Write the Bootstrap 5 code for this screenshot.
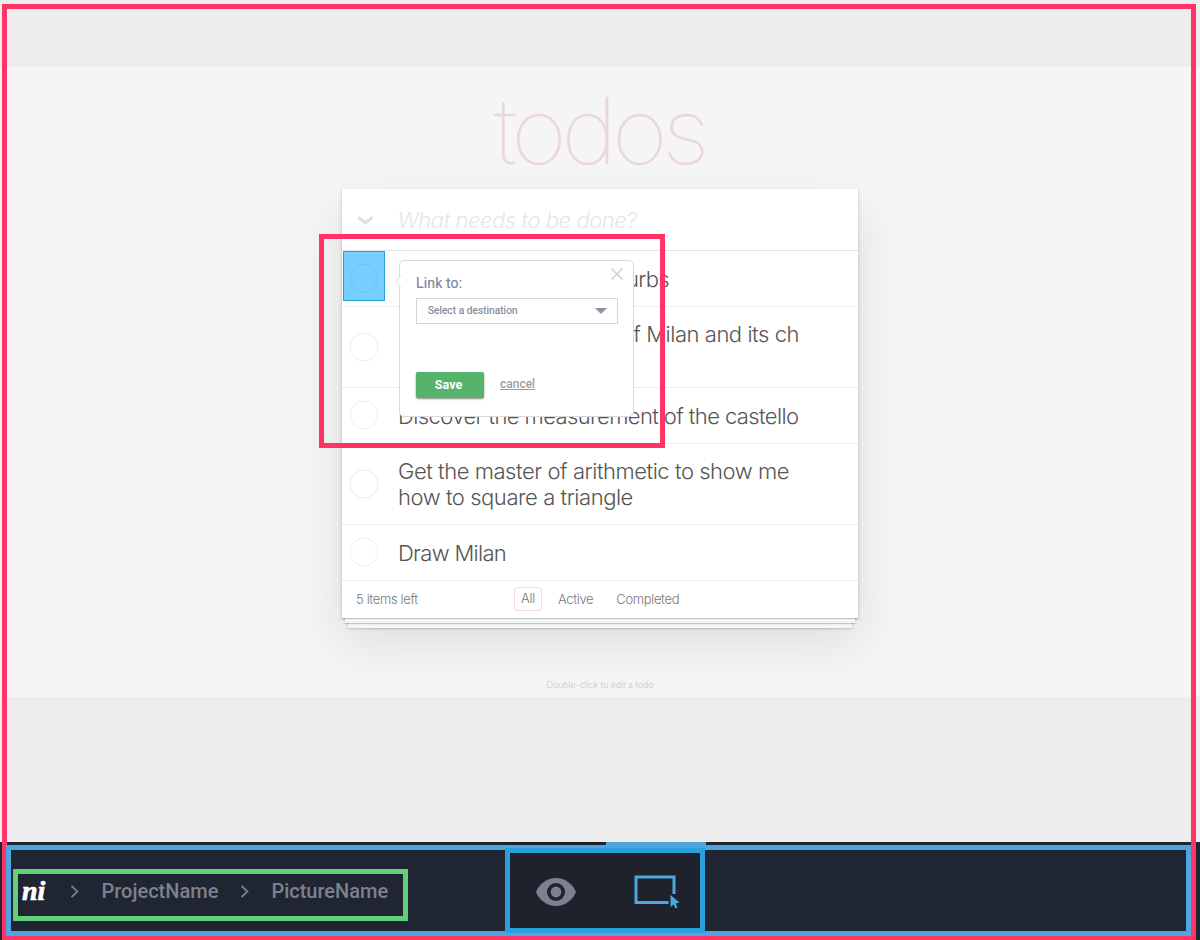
<!DOCTYPE html>
<html lang="en">
<head>
<meta charset="utf-8">
<meta name="viewport" content="width=device-width, initial-scale=1">
<title>Todos prototype editor</title>
<link href="https://cdn.jsdelivr.net/npm/bootstrap@5.3.0/dist/css/bootstrap.min.css" rel="stylesheet">
<style>
  body { height: 940px; background: #ededed; font-family: Roboto, sans-serif; }
  .stage { height: 842px; padding-top: 67px; }
  .artboard { height: 630px; background: #f5f5f5; font-family: Inter, "Liberation Sans", sans-serif; color: #555; }
  .todo-title { height: 122px; padding: 16px 2px 0 0; font-size: 92px; font-weight: 100; line-height: 96px; letter-spacing: -5.4px; color: #ead7d7; transform: scaleX(1.05); -webkit-text-stroke: .3px #ead7d7; }
  .todo-app { width: 516px; height: 429px; background: #fff;
    box-shadow: 0 1px 1px rgba(0,0,0,.2), 0 8px 0 -3px #f6f6f6, 0 9px 1px -3px rgba(0,0,0,.2), 0 16px 0 -6px #f6f6f6, 0 17px 2px -6px rgba(0,0,0,.2), 0 2px 4px rgba(0,0,0,.14), 0 23px 47px rgba(0,0,0,.1); }
  .todo-row { border-bottom: 1px solid #ededed; font-size: 22px; font-weight: 300; line-height: 26.2px; }
  .todo-row > svg { width: 44px; flex: none; }
  .todo-text { padding: 1px 0 0 12px; white-space: nowrap; letter-spacing: -.45px; }
  .todo-new { height: 62px; border-color: #e3e3e3; }
  .todo-new .todo-text { padding-left: 11.5px; font-style: italic; color: #e6e6e6; }
  .row-one { height: 55.5px; }
  .row-two { height: 81.5px; }
  .tight { letter-spacing: -.6px; }
  .tighter { letter-spacing: -.7px; }
  .from-right { margin-left: auto; padding-left: 0; }
  .todo-foot { height: 38px; padding-left: 14px; font-size: 13px; font-weight: 300; color: #777; letter-spacing: -.35px; }
  .todo-left { width: 158px; }
  .filter-all { width: 28px; height: 24px; margin-bottom: 1px; border: 1px solid #f0dada; border-radius: 3px; }
  .filter-done { margin-left: 23px; }
  .todo-hint { margin-top: 60px; font-size: 9px; line-height: 14px; color: #c8c8c8; font-weight: 300; letter-spacing: -.12px; }
  .hotspot { left: 343px; top: 251px; width: 42px; height: 50px; background: #76cfff; border: 1px solid #2c9fd9; }
  .link-pop { left: 399px; top: 260px; width: 235px; height: 157px; background: #fff; border: 1px solid #d6d8da; border-radius: 5px; padding: 12px 15px 0 16px; color: #8088a0; }
  .link-label { font-size: 14px; line-height: 20px; font-weight: 400; letter-spacing: .15px; -webkit-text-stroke: .2px #8088a0; }
  .pop-arrow { left: -5px; top: 14px; }
  .pop-close { right: 9px; top: 6px; }
  .dest-select { height: 26px; margin-top: 5px; border: 1px solid #d3d5d8; padding: 0 10px 2px 11px; font-size: 10px; font-weight: 400; letter-spacing: .1px; -webkit-text-stroke: .2px #8088a0; }
  .dest-select svg { margin-top: 2px; }
  .pop-actions { margin-top: 48px; }
  .btn-save { --bs-btn-padding-y: 0; --bs-btn-padding-x: 0; width: 68px; height: 26px; border: 0; border-radius: 2px; background: #55b36a; color: #fff; font-size: 12.5px; font-weight: 700; box-shadow: 0 1px 2px rgba(0,0,0,.45); padding-right: 3px; }
  .btn-cancel { color: #9a9da8; font-size: 12px; font-weight: 500; margin-left: 16px; line-height: 24px; }
  .editor-bar { height: 98px; background: #202532; }
  .crumbs { width: 505px; padding-left: 22px; color: #7d818e; font-size: 20px; font-weight: 500; }
  .brand-ni { width: 49px; color: #fff; font: italic 700 28px/30px "Liberation Serif", serif; -webkit-text-stroke: .7px #fff; }
  .crumb-a { padding-left: 1.5px; }
  .tool-tabs { width: 200px; padding: 1px 0 0 1px; background: #1d222d; }
  .tool-tab { width: 100px; height: 98px; }
  .tab-marker { left: 606px; top: 842px; width: 100px; height: 6px; background: #4fa6df; }
  .outline { border: 5px solid; pointer-events: none; }
  .o-page { left: 2px; top: 4px; width: 1194px; height: 937px; border-color: #ff3366; }
  .o-pop { left: 319px; top: 234px; width: 346px; height: 214px; border-color: #ff3366; }
  .o-bar { left: 6px; top: 845px; width: 1185px; height: 91px; border-color: #4fa6df; }
  .o-crumbs { left: 13px; top: 869px; width: 395px; height: 52px; border-color: #63cf7a; }
  .o-tools { left: 505px; top: 848px; width: 200px; height: 85px; border-color: #2b9fdb; }
</style>
</head>
<body class="position-relative overflow-hidden">
<main class="stage">
  <section class="artboard d-flex flex-column align-items-center">
    <h1 class="todo-title m-0">todos</h1>
    <div class="todo-app">
      <div class="todo-row todo-new d-flex align-items-center">
        <svg height="20" viewBox="0 0 44 20"><path d="M16 6L23.300 10.500L30.500 6V9.300L23.300 14.700L16 9.300Z" fill="#e1e1e1"/></svg>
        <span class="todo-text">What needs to be done?</span>
      </div>
      <div class="todo-row row-one d-flex align-items-center">
        <span class="todo-text from-right tighter" style="padding-right: 189px">urbs</span>
      </div>
      <div class="todo-row row-two d-flex align-items-center">
        <svg height="30" viewBox="0 0 44 30"><circle cx="22" cy="15" r="14" fill="none" stroke="#ededed"/></svg>
        <span class="todo-text from-right align-self-start" style="padding: 14px 59px 0 0">of Milan and its ch</span>
      </div>
      <div class="todo-row row-one d-flex align-items-center">
        <svg height="30" viewBox="0 0 44 30"><circle cx="22" cy="15" r="14" fill="none" stroke="#ededed"/></svg>
        <span class="todo-text tight">Discover the measurement of the castello</span>
      </div>
      <div class="todo-row row-two d-flex align-items-center">
        <svg height="30" viewBox="0 0 44 30"><circle cx="22" cy="15" r="14" fill="none" stroke="#ededed"/></svg>
        <span class="todo-text">Get the master of arithmetic to show me<br>how to square a triangle</span>
      </div>
      <div class="todo-row row-one d-flex align-items-center">
        <svg height="30" viewBox="0 0 44 30"><circle cx="22" cy="15" r="14" fill="none" stroke="#ededed"/></svg>
        <span class="todo-text tighter">Draw Milan</span>
      </div>
      <div class="todo-foot d-flex align-items-center">
        <span class="todo-left">5 items left</span>
        <span class="filter-all d-flex align-items-center justify-content-center">All</span>
        <span class="ms-3">Active</span>
        <span class="filter-done">Completed</span>
      </div>
    </div>
    <div class="todo-hint">Double-click to edit a todo</div>
  </section>
</main>

<nav class="editor-bar d-flex">
  <div class="crumbs d-flex align-items-center">
    <span class="brand-ni">ni</span>
    <svg width="29" height="14" viewBox="0 0 29 14"><path d="M0.5 2L6.500 7.500L0.5 13" fill="none" stroke="#7d818e" stroke-width="1.7"/></svg>
    <span class="crumb-a">ProjectName</span>
    <svg width="53" height="14" viewBox="-23 0 53 14"><path d="M0.5 2L6.500 7.500L0.5 13" fill="none" stroke="#7d818e" stroke-width="1.7"/></svg>
    <span>PictureName</span>
  </div>
  <div class="tool-tabs d-flex">
    <span class="tool-tab d-flex align-items-center justify-content-center">
      <svg width="40" height="28" viewBox="0 0 40 28"><path fill="#7d818e" fill-rule="evenodd" d="M20 0C11 0 3.300 5.800 0 14C3.300 22.200 11 28 20 28S36.700 22.200 40 14C36.700 5.800 29 0 20 0ZM20 23A9 9 0 1 1 20 5A9 9 0 1 1 20 23Z"/><circle cx="20" cy="14" r="5.400" fill="#7d818e"/></svg>
    </span>
    <span class="tool-tab d-flex align-items-center justify-content-center ps-1">
      <svg width="46" height="34" viewBox="0.500 0 46 34"><path d="M35 27.500H2.500V2H40.500V19" fill="none" stroke="#4fa6df" stroke-width="3"/><path d="M37 20L46 27.500L42.200 28.500L44 32.500L42 33.500L40.200 29.500L37 32Z" fill="#4fa6df"/></svg>
    </span>
  </div>
</nav>

<div class="hotspot position-absolute">
  <svg class="d-block" width="40" height="48" viewBox="0 0 40 48"><circle cx="20" cy="26" r="14" fill="none" stroke="#6cc3f3"/></svg>
</div>
<div class="link-pop position-absolute">
  <svg class="pop-arrow position-absolute" width="6" height="13" viewBox="0 0 6 13"><path d="M6 0.500L1 6.500L6 12.500" fill="#fff" stroke="#d6d8da"/></svg>
  <svg class="pop-close position-absolute" width="14" height="14" viewBox="0 0 14 14"><path d="M1.500 1.500L12.500 12.500M12.500 1.500L1.500 12.500" stroke="#cdcfd2" stroke-width="1.500"/></svg>
  <div class="link-label">Link to:</div>
  <div class="dest-select d-flex align-items-center justify-content-between">Select a destination
    <svg width="12" height="6" viewBox="0 0 12 6"><path d="M0 0H12L6 6Z" fill="#8f94a5"/></svg>
  </div>
  <div class="pop-actions d-flex">
    <button class="btn btn-save" type="button">Save</button>
    <a class="btn-cancel" href="#">cancel</a>
  </div>
</div>

<div class="outline o-page position-absolute"></div>
<div class="outline o-bar position-absolute"></div>
<div class="tab-marker position-absolute"></div>
<div class="outline o-crumbs position-absolute"></div>
<div class="outline o-tools position-absolute"></div>
<div class="outline o-pop position-absolute"></div>
<script src="https://cdn.jsdelivr.net/npm/bootstrap@5.3.0/dist/js/bootstrap.bundle.min.js"></script>
</body>
</html>
